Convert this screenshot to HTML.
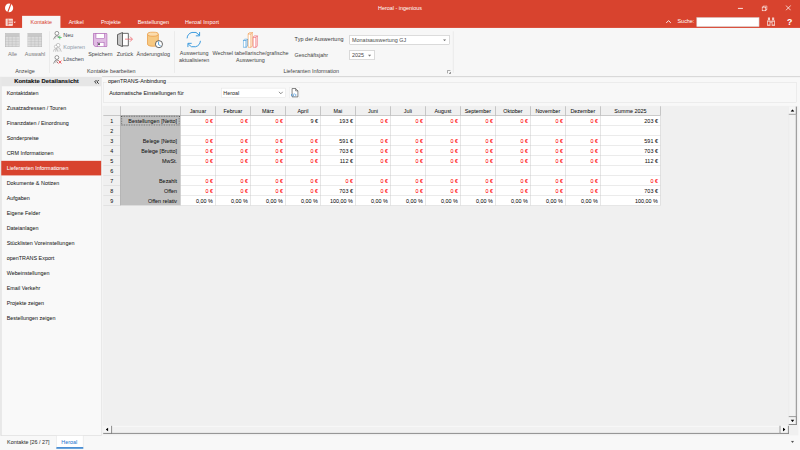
<!DOCTYPE html>
<html lang="de"><head><meta charset="utf-8"><title>Heroal - ingenious</title>
<style>
html,body{margin:0;padding:0;width:800px;height:450px;overflow:hidden;background:#f0f0f0}
#app{position:absolute;left:0;top:0;width:1920px;height:1080px;transform:scale(0.4166667);transform-origin:0 0;font-family:"Liberation Sans","DejaVu Sans",sans-serif;font-size:13px;letter-spacing:0;color:#222;background:#f0f0f0;overflow:hidden}
#app *{box-sizing:border-box}
#app{-webkit-text-stroke:0.08px currentColor}
#ribbon,#title{-webkit-text-stroke:0}
.abs{position:absolute}
.t{position:absolute;white-space:nowrap;line-height:14px}
.c{text-align:center;transform:translateX(-50%)}
/* title */
#title{left:0;top:0;width:1920px;height:68px;background:#d8432e}
#title .t{color:#fff}
.tab{position:absolute;top:38px;height:30px;color:#fff;line-height:32px;text-align:center;white-space:nowrap}
.tab.act{background:#f7f7f7;color:#d8432e}
#ribbon{z-index:2;left:0;top:67px;width:1920px;height:117px;background:#f7f7f7}
.sep{position:absolute;top:8px;width:1px;height:100px;background:#dadada}
.gl{position:absolute;top:98px;color:#444;white-space:nowrap;transform:translateX(-50%);line-height:14px}
.bl{position:absolute;color:#444;white-space:nowrap;transform:translateX(-50%);text-align:center;line-height:15px}
.combo{position:absolute;background:#fff;border:1px solid #ababab;height:22px;line-height:20px;padding-left:4px;color:#333}
/* sidebar */
#side{left:2px;top:184px;width:242px;height:862px;background:#f9f9f9;border-right:1px solid #c2c2c2;border-left:1px solid #bdbdbd;border-bottom:1px solid #c4c4c4;box-shadow:-2px 0 0 #f0f0f0}
#sidehead{left:0;top:0;width:240px;height:23px;-webkit-text-stroke:0.35px #111;background:#e6e6e6;font-weight:bold;color:#111;line-height:22px;font-size:14px;letter-spacing:0.2px}
.si{position:absolute;left:0;width:240px;height:36px;line-height:38px;padding-left:13px;color:#222;white-space:nowrap}
.si.sel{background:#d8432e;color:#fff;height:35px;margin-top:0;line-height:37px}
/* grid */
#grid .hl{height:1px;background:#d0d0d0}
#grid .hl2{height:1px;background:#cfcfcf}
#grid .vl{width:1px;background:#c4c4c4}
#grid .hd{background:#8c8c8c}
#grid .gt{color:#111}
#grid .gt.r{color:#f00}
</style></head><body>
<div id="app">

<!-- TITLE BAR -->
<div id="title" class="abs">
  <svg class="abs" style="left:10px;top:6px" width="26" height="28" viewBox="0 0 26 28"><ellipse cx="11.8" cy="13" rx="9.8" ry="10.6" fill="#fff"/><path d="M15.2 1.5L17.8 2.2L9.6 24.5L7 23.8Z" fill="#d8432e"/></svg>
  <div class="t c" style="left:960px;top:12px">Heroal - ingenious</div>
  <div class="abs" style="left:1771px;top:19px;width:12px;height:2px;background:#fff"></div>
  <svg class="abs" style="left:1828px;top:13px" width="14" height="14" viewBox="0 0 14 14"><path d="M4 3.5V1h9v9h-2.5" fill="none" stroke="#fff" stroke-width="1.5"/><rect x="1" y="4" width="9" height="9" fill="none" stroke="#fff" stroke-width="1.8"/></svg>
  <svg class="abs" style="left:1885px;top:12px" width="14" height="14" viewBox="0 0 14 14"><path d="M1 1L13 13M13 1L1 13" stroke="#fff" stroke-width="1.8"/></svg>
  <!-- second row right -->
  <svg class="abs" style="left:1598px;top:47px" width="13" height="10" viewBox="0 0 13 10"><path d="M1 8L6.5 2.5L12 8" stroke="#fff" stroke-width="2.2" fill="none"/></svg>
  <div class="t" style="left:1626px;top:45px">Suche:</div>
  <div class="abs" style="left:1672px;top:42px;width:150px;height:22px;background:#fff;border:1px solid #c9c9c9"></div>
  <svg class="abs" style="left:1840px;top:41px" width="22" height="22" viewBox="0 0 22 22"><g fill="#f5cfc9"><rect x="3" y="1" width="5" height="6"/><rect x="13" y="1" width="5" height="6"/><rect x="1" y="8" width="8" height="13"/><rect x="12" y="8" width="8" height="13"/><rect x="9" y="9" width="3" height="5"/></g><g fill="#d8432e"><rect x="3" y="11" width="4" height="7"/><rect x="14" y="11" width="4" height="7"/></g></svg>
  <div class="t" style="left:1889px;top:42px;font-size:21px;line-height:20px;font-weight:bold;letter-spacing:0">?</div>
  <!-- app menu icon -->
  <svg class="abs" style="left:13px;top:44px" width="26" height="19" viewBox="0 0 26 19"><rect x="1" y="1.5" width="16" height="16" fill="#f6d6d0" stroke="#fbeae7" stroke-width="1.6"/><path d="M6.5 2V17M6.5 6.8H17M6.5 12H17" stroke="#d8432e" stroke-width="1.5"/><path d="M19.5 8h5.5l-2.75 3z" fill="#fff"/></svg>
  <div class="tab act" style="left:53px;width:92px">Kontakte</div>
  <div class="tab" style="left:144px;width:78px">Artikel</div>
  <div class="tab" style="left:222px;width:88px">Projekte</div>
  <div class="tab" style="left:313px;width:110px">Bestellungen</div>
  <div class="tab" style="left:424px;width:122px;letter-spacing:0.25px">Heroal Import</div>
</div>

<!-- RIBBON -->
<div id="ribbon" class="abs">
  <!-- Anzeige -->
  <svg class="abs" style="left:12px;top:12px" width="35" height="34" viewBox="0 0 36 36" preserveAspectRatio="none"><rect x="0.500" y="0.500" width="35" height="35" fill="#dcdcdc" stroke="#adadad" stroke-width="1.400"/><rect x="1" y="1" width="34" height="8" fill="#c9c9c9"/><path d="M0 9H36M0 15.500H36M0 22H36M0 28.500H36M9 9V36M18 9V36M27 9V36" stroke="#b9b9b9"/></svg>
  <svg class="abs" style="left:66px;top:12px" width="35" height="34" viewBox="0 0 36 36" preserveAspectRatio="none"><rect x="0.500" y="0.500" width="35" height="35" fill="#dcdcdc" stroke="#adadad" stroke-width="1.400"/><rect x="1" y="1" width="34" height="8" fill="#c9c9c9"/><path d="M0 9H36M0 15.500H36M0 22H36M0 28.500H36M9 9V36M18 9V36M27 9V36" stroke="#b9b9b9"/></svg>
  <div class="bl" style="left:30px;top:56px;color:#7a7a7a">Alle</div>
  <div class="bl" style="left:84px;top:56px;color:#7a7a7a">Auswahl</div>
  <div class="gl" style="left:60px">Anzeige</div>
  <div class="sep" style="left:119px"></div>
  <!-- small buttons -->
  <svg class="abs" style="left:127px;top:7px" width="23" height="22" viewBox="0 0 23 22"><circle cx="9.5" cy="6" r="4.6" fill="#fff" stroke="#555" stroke-width="1.4"/><path d="M1.5 20.5L5 13.5Q9.500 10.5 14 13.500L15 15.500" fill="none" stroke="#555" stroke-width="1.4"/><path d="M6.500 14v5M12 14v3" stroke="#888" stroke-width="1"/><path d="M16.500 11.500v9M12 16h9" stroke="#56c26b" stroke-width="2"/></svg>
  <svg class="abs" style="left:127px;top:36px" width="23" height="22" viewBox="0 0 23 22"><circle cx="12.500" cy="5.500" r="4.300" fill="#fff" stroke="#9a9a9a" stroke-width="1.3"/><path d="M6 21L8.500 13Q12.500 10 17 13L20 21" fill="none" stroke="#9a9a9a" stroke-width="1.3"/><circle cx="7" cy="9" r="3.600" fill="#fff" stroke="#9a9a9a" stroke-width="1.2"/><path d="M1 21L3 15.500Q7 13 10.500 15.500L12 21" fill="none" stroke="#9a9a9a" stroke-width="1.2"/><path d="M10 17v4M15 15v6" stroke="#b5b5b5" stroke-width="1"/></svg>
  <svg class="abs" style="left:127px;top:65px" width="23" height="22" viewBox="0 0 23 22"><circle cx="9.500" cy="6" r="4.600" fill="#fff" stroke="#555" stroke-width="1.4"/><path d="M1.500 20.500L5 13.500Q9.500 10.500 14 13.500" fill="none" stroke="#555" stroke-width="1.400"/><path d="M6.500 14v5" stroke="#888" stroke-width="1"/><path d="M9 15.500l3 4" stroke="#7a2020" stroke-width="1.600"/><path d="M13.500 13.500l7 7M20.500 13.500l-7 7" stroke="#ee3a43" stroke-width="2"/></svg>
  <div class="t" style="left:152px;top:11px;color:#3c4450">Neu</div>
  <div class="t" style="left:152px;top:40px;color:#8b97a8">Kopieren</div>
  <div class="t" style="left:152px;top:69px;color:#3c4450">Löschen</div>
  <!-- Speichern -->
  <svg class="abs" style="left:223px;top:12px" width="35" height="34" viewBox="0 0 36 36" preserveAspectRatio="none"><path d="M3 1h30a2 2 0 0 1 2 2v30a2 2 0 0 1-2 2H6L1 30V3a2 2 0 0 1 2-2z" fill="#e0bce3" stroke="#a85cb0" stroke-width="1.800"/><rect x="7.500" y="1.500" width="21" height="13" fill="#fff" stroke="#a85cb0" stroke-width="1.400"/><rect x="11.500" y="24" width="16" height="11" fill="#fff" stroke="#a85cb0" stroke-width="1.400"/><rect x="13" y="26" width="4" height="5" fill="#444"/></svg>
  <div class="bl" style="left:241px;top:56px">Speichern</div>
  <!-- Zurück -->
  <svg class="abs" style="left:280px;top:10px" width="40" height="36" viewBox="0 0 40 36"><path d="M14 3h14v30H14" fill="#fff" stroke="#444" stroke-width="1.900"/><path d="M14 1L2 6v24l12 5z" fill="#c6c6c6" stroke="#444" stroke-width="1.900"/><path d="M20 17h17M32 11l6 6-6 6" fill="none" stroke="#f0646c" stroke-width="1.900"/></svg>
  <div class="bl" style="left:300px;top:56px">Zurück</div>
  <!-- Änderungslog -->
  <svg class="abs" style="left:352px;top:8px" width="44" height="42" viewBox="0 0 44 42"><path d="M2 7v24c0 3 5.500 5 13 5s13-2 13-5V7" fill="#f6c983" stroke="#e8983f" stroke-width="1.700"/><ellipse cx="15" cy="7" rx="13" ry="5" fill="#fbdcae" stroke="#e8983f" stroke-width="1.700"/><circle cx="29.500" cy="31" r="8.500" fill="#fff" stroke="#484848" stroke-width="2"/><path d="M28.500 25v7l5 3" fill="none" stroke="#2f8fd6" stroke-width="1.900"/></svg>
  <div class="bl" style="left:368px;top:56px">Änderungslog</div>
  <div class="gl" style="left:267px">Kontakte bearbeiten</div>
  <div class="sep" style="left:419px"></div>
  <!-- Auswertung aktualisieren -->
  <svg class="abs" style="left:445px;top:8px" width="40" height="40" viewBox="0 0 40 40"><path d="M4 17A16 16 0 0 1 33 9" fill="none" stroke="#3396dc" stroke-width="2.300"/><path d="M34 2v9h-9" fill="none" stroke="#3396dc" stroke-width="2.300"/><path d="M36 23A16 16 0 0 1 7 31" fill="none" stroke="#3396dc" stroke-width="2.300"/><path d="M6 38v-9h9" fill="none" stroke="#3396dc" stroke-width="2.300"/></svg>
  <div class="bl" style="left:466px;top:55px;line-height:14.500px">Auswertung<br>aktualisieren</div>
  <!-- Wechsel -->
  <svg class="abs" style="left:583px;top:10px" width="38" height="38" viewBox="0 0 38 38"><path d="M0.8 20.2H7.8V36.5H0.8Z" fill="#fff" stroke="#2f8fd6" stroke-width="1.3"/><path d="M7.8 20.2L11.0 17V33.3L7.8 36.5Z" fill="#fff" stroke="#2f8fd6" stroke-width="1.2"/><path d="M0.8 20.2L4.0 17H11.0L7.8 20.2Z" fill="#fff" stroke="#2f8fd6" stroke-width="1.2"/><path d="M12.6 4.2H19.6V36.5H12.6Z" fill="#fff" stroke="#f0913a" stroke-width="1.3"/><path d="M19.6 4.2L22.8 1V33.3L19.6 36.5Z" fill="#fff" stroke="#f0913a" stroke-width="1.2"/><path d="M12.6 4.2L15.8 1H22.8L19.6 4.2Z" fill="#fff" stroke="#f0913a" stroke-width="1.2"/><path d="M24.6 12.2H31.6V36.5H24.6Z" fill="#fff" stroke="#ea4e58" stroke-width="1.3"/><path d="M31.6 12.2L34.800000000000004 9V33.3L31.6 36.5Z" fill="#fff" stroke="#ea4e58" stroke-width="1.2"/><path d="M24.6 12.2L27.8 9H34.800000000000004L31.6 12.2Z" fill="#fff" stroke="#ea4e58" stroke-width="1.2"/></svg>
  <div class="bl" style="left:601px;top:55px;line-height:14.500px">Wechsel tabellarische/grafische<br>Auswertung</div>
  <!-- combos -->
  <div class="t" style="left:707px;top:20px;color:#333;letter-spacing:0.15px">Typ der Auswertung</div>
  <div class="combo" style="left:839px;top:17px;width:240px;height:23px;line-height:23px;color:#4a4a4a;padding-left:5px">Monatsauswertung GJ<svg class="abs" style="right:7px;top:9px" width="8" height="5" viewBox="0 0 8 5"><path d="M0 0h8L4 5z" fill="#777"/></svg></div>
  <div class="t" style="left:707px;top:58px;color:#444">Geschäftsjahr</div>
  <div class="combo" style="left:839px;top:54px;width:60px;height:23px;line-height:22px;color:#4a4a4a;padding-left:5px">2025<svg class="abs" style="right:7px;top:9px" width="8" height="5" viewBox="0 0 8 5"><path d="M0 0h8L4 5z" fill="#777"/></svg></div>
  <div class="gl" style="left:747px">Lieferanten Information</div>
  <svg class="abs" style="left:1073px;top:101px" width="10" height="10" viewBox="0 0 10 10"><path d="M1 8V1h7" fill="none" stroke="#666" stroke-width="1.4"/><path d="M9 4v5H4z" fill="#666"/></svg>
  <div class="sep" style="left:1087px"></div>
</div>

<!-- SIDEBAR -->
<div class="abs" style="left:245px;top:182.600px;width:1675px;height:2px;background:#cfcfcf;z-index:3"></div>
<div id="side" class="abs">
  <div id="sidehead" class="abs"><span class="abs" style="left:31px;white-space:nowrap">Kontakte Detailansicht</span>
    <svg class="abs" style="left:223px;top:7px" width="12" height="11" viewBox="0 0 11 10"><path d="M5 1L1 5l4 4M10 1L6 5l4 4" fill="none" stroke="#111" stroke-width="1.9"/></svg></div>
  <div class="si" style="top:22px">Kontaktdaten</div>
  <div class="si" style="top:58px">Zusatzadressen / Touren</div>
  <div class="si" style="top:94px">Finanzdaten / Einordnung</div>
  <div class="si" style="top:130px">Sonderpreise</div>
  <div class="si" style="top:166px">CRM Informationen</div>
  <div class="si sel" style="top:202px">Lieferanten Informationen</div>
  <div class="si" style="top:238px">Dokumente &amp; Notizen</div>
  <div class="si" style="top:274px">Aufgaben</div>
  <div class="si" style="top:310px">Eigene Felder</div>
  <div class="si" style="top:346px">Dateianlagen</div>
  <div class="si" style="top:382px">Stücklisten Voreinstellungen</div>
  <div class="si" style="top:418px">openTRANS Export</div>
  <div class="si" style="top:454px">Webeinstellungen</div>
  <div class="si" style="top:490px">Email Verkehr</div>
  <div class="si" style="top:526px">Projekte zeigen</div>
  <div class="si" style="top:562px">Bestellungen zeigen</div>
</div>

<!-- MAIN -->
<div class="abs" style="left:244px;top:185px;width:1676px;height:862px;background:#f8f8f8"></div>
<div class="abs" style="left:246px;top:254px;width:1670px;height:791px;background:#f0f0f0"></div>
<div class="abs" style="left:248px;top:197px;width:1664px;height:49px;border:1px solid #dcdcdc"></div>
<div class="t" style="left:256px;top:189px;background:#f8f8f8;padding:0 3px;color:#222">openTRANS-Anbindung</div>
<div class="t" style="left:262px;top:217px;color:#222">Automatische Einstellungen für</div>
<div class="combo" style="left:531px;top:211px;width:155px;height:23px;line-height:22px;border-color:#dcdcdc;padding-left:4px">Heroal<svg class="abs" style="right:5px;top:7px" width="12" height="8" viewBox="0 0 12 8"><path d="M1 1L6 6L11 1" fill="none" stroke="#444" stroke-width="1.5"/></svg></div>
<svg class="abs" style="left:694px;top:209px" width="26" height="27" viewBox="0 0 26 27"><rect x="0.5" y="0.5" width="25" height="26" rx="1" fill="#fdfdfd" stroke="#dedede"/><path d="M7 3.500h8.500l5.500 5.500v14.500H7z" fill="#fff" stroke="#3c3c3c" stroke-width="1.5"/><path d="M15.500 3.500v5.500h5.500" fill="none" stroke="#3c3c3c" stroke-width="1.400"/><path d="M7.500 16l-3 3 3 3M14 16l3 3-3 3M12 15.500l-2.500 7" fill="none" stroke="#2a86d8" stroke-width="1.600"/></svg>

<div id="grid" class="abs" style="left:248px;top:255px;width:1337px;height:238px">
<div class="abs" style="left:0;top:0;width:1337px;height:22px;background:#f0f0f0"></div>
<div class="abs" style="left:0;top:22px;width:41px;height:216px;background:#f0f0f0"></div>
<div class="abs" style="left:41px;top:22px;width:144px;height:216px;background:#c0c0c0"></div>
<div class="abs" style="left:185px;top:22px;width:1152px;height:216px;background:#fff"></div>
<div class="abs hl" style="left:185px;top:45px;width:1152px"></div>
<div class="abs hl2" style="left:0;top:45px;width:41px"></div>
<div class="abs hl" style="left:185px;top:69px;width:1152px"></div>
<div class="abs hl2" style="left:0;top:69px;width:41px"></div>
<div class="abs hl" style="left:185px;top:93px;width:1152px"></div>
<div class="abs hl2" style="left:0;top:93px;width:41px"></div>
<div class="abs hl" style="left:185px;top:117px;width:1152px"></div>
<div class="abs hl2" style="left:0;top:117px;width:41px"></div>
<div class="abs hl" style="left:185px;top:141px;width:1152px"></div>
<div class="abs hl2" style="left:0;top:141px;width:41px"></div>
<div class="abs hl" style="left:185px;top:165px;width:1152px"></div>
<div class="abs hl2" style="left:0;top:165px;width:41px"></div>
<div class="abs hl" style="left:185px;top:189px;width:1152px"></div>
<div class="abs hl2" style="left:0;top:189px;width:41px"></div>
<div class="abs hl" style="left:185px;top:213px;width:1152px"></div>
<div class="abs hl2" style="left:0;top:213px;width:41px"></div>
<div class="abs hl" style="left:185px;top:237px;width:1152px"></div>
<div class="abs hl2" style="left:0;top:237px;width:41px"></div>
<div class="abs hd" style="left:0;top:21px;width:1337px;height:1px"></div>
<div class="abs hd" style="left:40px;top:0;width:1px;height:22px"></div>
<div class="abs hd" style="left:40px;top:22px;width:1px;height:216px"></div>
<div class="abs hd" style="left:184px;top:0;width:1px;height:22px"></div>
<div class="abs" style="left:184px;top:22px;width:1px;height:216px;background:#a8a8a8"></div>
<div class="abs hd" style="left:268px;top:0;width:1px;height:22px"></div>
<div class="abs vl" style="left:268px;top:22px;height:216px"></div>
<div class="abs hd" style="left:352px;top:0;width:1px;height:22px"></div>
<div class="abs vl" style="left:352px;top:22px;height:216px"></div>
<div class="abs hd" style="left:436px;top:0;width:1px;height:22px"></div>
<div class="abs vl" style="left:436px;top:22px;height:216px"></div>
<div class="abs hd" style="left:520px;top:0;width:1px;height:22px"></div>
<div class="abs vl" style="left:520px;top:22px;height:216px"></div>
<div class="abs hd" style="left:604px;top:0;width:1px;height:22px"></div>
<div class="abs vl" style="left:604px;top:22px;height:216px"></div>
<div class="abs hd" style="left:688px;top:0;width:1px;height:22px"></div>
<div class="abs vl" style="left:688px;top:22px;height:216px"></div>
<div class="abs hd" style="left:772px;top:0;width:1px;height:22px"></div>
<div class="abs vl" style="left:772px;top:22px;height:216px"></div>
<div class="abs hd" style="left:856px;top:0;width:1px;height:22px"></div>
<div class="abs vl" style="left:856px;top:22px;height:216px"></div>
<div class="abs hd" style="left:940px;top:0;width:1px;height:22px"></div>
<div class="abs vl" style="left:940px;top:22px;height:216px"></div>
<div class="abs hd" style="left:1024px;top:0;width:1px;height:22px"></div>
<div class="abs vl" style="left:1024px;top:22px;height:216px"></div>
<div class="abs hd" style="left:1108px;top:0;width:1px;height:22px"></div>
<div class="abs vl" style="left:1108px;top:22px;height:216px"></div>
<div class="abs hd" style="left:1192px;top:0;width:1px;height:22px"></div>
<div class="abs vl" style="left:1192px;top:22px;height:216px"></div>
<div class="abs hd" style="left:1336px;top:0;width:1px;height:22px"></div>
<div class="abs vl" style="left:1336px;top:22px;height:216px"></div>
<div class="t c gt" style="left:227.0px;top:4px">Januar</div>
<div class="t c gt" style="left:311.0px;top:4px">Februar</div>
<div class="t c gt" style="left:395.0px;top:4px">März</div>
<div class="t c gt" style="left:479.0px;top:4px">April</div>
<div class="t c gt" style="left:563.0px;top:4px">Mai</div>
<div class="t c gt" style="left:647.0px;top:4px">Juni</div>
<div class="t c gt" style="left:731.0px;top:4px">Juli</div>
<div class="t c gt" style="left:815.0px;top:4px">August</div>
<div class="t c gt" style="left:899.0px;top:4px">September</div>
<div class="t c gt" style="left:983.0px;top:4px">Oktober</div>
<div class="t c gt" style="left:1067.0px;top:4px">November</div>
<div class="t c gt" style="left:1151.0px;top:4px">Dezember</div>
<div class="t c gt" style="left:1265.0px;top:4px">Summe 2025</div>
<div class="t c gt" style="left:20.5px;top:29px">1</div>
<div class="t gt" style="right:1160px;top:29px">Bestellungen [Netto]</div>
<div class="t gt r" style="right:1074px;top:29px">0 €</div>
<div class="t gt r" style="right:990px;top:29px">0 €</div>
<div class="t gt r" style="right:906px;top:29px">0 €</div>
<div class="t gt" style="right:822px;top:29px">9 €</div>
<div class="t gt" style="right:738px;top:29px">193 €</div>
<div class="t gt r" style="right:654px;top:29px">0 €</div>
<div class="t gt r" style="right:570px;top:29px">0 €</div>
<div class="t gt r" style="right:486px;top:29px">0 €</div>
<div class="t gt r" style="right:402px;top:29px">0 €</div>
<div class="t gt r" style="right:318px;top:29px">0 €</div>
<div class="t gt r" style="right:234px;top:29px">0 €</div>
<div class="t gt r" style="right:150px;top:29px">0 €</div>
<div class="t gt" style="right:6px;top:29px">203 €</div>
<div class="t c gt" style="left:20.5px;top:53px">2</div>
<div class="t c gt" style="left:20.5px;top:77px">3</div>
<div class="t gt" style="right:1160px;top:77px">Belege [Netto]</div>
<div class="t gt r" style="right:1074px;top:77px">0 €</div>
<div class="t gt r" style="right:990px;top:77px">0 €</div>
<div class="t gt r" style="right:906px;top:77px">0 €</div>
<div class="t gt r" style="right:822px;top:77px">0 €</div>
<div class="t gt" style="right:738px;top:77px">591 €</div>
<div class="t gt r" style="right:654px;top:77px">0 €</div>
<div class="t gt r" style="right:570px;top:77px">0 €</div>
<div class="t gt r" style="right:486px;top:77px">0 €</div>
<div class="t gt r" style="right:402px;top:77px">0 €</div>
<div class="t gt r" style="right:318px;top:77px">0 €</div>
<div class="t gt r" style="right:234px;top:77px">0 €</div>
<div class="t gt r" style="right:150px;top:77px">0 €</div>
<div class="t gt" style="right:6px;top:77px">591 €</div>
<div class="t c gt" style="left:20.5px;top:101px">4</div>
<div class="t gt" style="right:1160px;top:101px">Belege [Brutto]</div>
<div class="t gt r" style="right:1074px;top:101px">0 €</div>
<div class="t gt r" style="right:990px;top:101px">0 €</div>
<div class="t gt r" style="right:906px;top:101px">0 €</div>
<div class="t gt r" style="right:822px;top:101px">0 €</div>
<div class="t gt" style="right:738px;top:101px">703 €</div>
<div class="t gt r" style="right:654px;top:101px">0 €</div>
<div class="t gt r" style="right:570px;top:101px">0 €</div>
<div class="t gt r" style="right:486px;top:101px">0 €</div>
<div class="t gt r" style="right:402px;top:101px">0 €</div>
<div class="t gt r" style="right:318px;top:101px">0 €</div>
<div class="t gt r" style="right:234px;top:101px">0 €</div>
<div class="t gt r" style="right:150px;top:101px">0 €</div>
<div class="t gt" style="right:6px;top:101px">703 €</div>
<div class="t c gt" style="left:20.5px;top:125px">5</div>
<div class="t gt" style="right:1160px;top:125px">MwSt.</div>
<div class="t gt r" style="right:1074px;top:125px">0 €</div>
<div class="t gt r" style="right:990px;top:125px">0 €</div>
<div class="t gt r" style="right:906px;top:125px">0 €</div>
<div class="t gt r" style="right:822px;top:125px">0 €</div>
<div class="t gt" style="right:738px;top:125px">112 €</div>
<div class="t gt r" style="right:654px;top:125px">0 €</div>
<div class="t gt r" style="right:570px;top:125px">0 €</div>
<div class="t gt r" style="right:486px;top:125px">0 €</div>
<div class="t gt r" style="right:402px;top:125px">0 €</div>
<div class="t gt r" style="right:318px;top:125px">0 €</div>
<div class="t gt r" style="right:234px;top:125px">0 €</div>
<div class="t gt r" style="right:150px;top:125px">0 €</div>
<div class="t gt" style="right:6px;top:125px">112 €</div>
<div class="t c gt" style="left:20.5px;top:149px">6</div>
<div class="t c gt" style="left:20.5px;top:173px">7</div>
<div class="t gt" style="right:1160px;top:173px">Bezahlt</div>
<div class="t gt r" style="right:1074px;top:173px">0 €</div>
<div class="t gt r" style="right:990px;top:173px">0 €</div>
<div class="t gt r" style="right:906px;top:173px">0 €</div>
<div class="t gt r" style="right:822px;top:173px">0 €</div>
<div class="t gt r" style="right:738px;top:173px">0 €</div>
<div class="t gt r" style="right:654px;top:173px">0 €</div>
<div class="t gt r" style="right:570px;top:173px">0 €</div>
<div class="t gt r" style="right:486px;top:173px">0 €</div>
<div class="t gt r" style="right:402px;top:173px">0 €</div>
<div class="t gt r" style="right:318px;top:173px">0 €</div>
<div class="t gt r" style="right:234px;top:173px">0 €</div>
<div class="t gt r" style="right:150px;top:173px">0 €</div>
<div class="t gt r" style="right:6px;top:173px">0 €</div>
<div class="t c gt" style="left:20.5px;top:197px">8</div>
<div class="t gt" style="right:1160px;top:197px">Offen</div>
<div class="t gt r" style="right:1074px;top:197px">0 €</div>
<div class="t gt r" style="right:990px;top:197px">0 €</div>
<div class="t gt r" style="right:906px;top:197px">0 €</div>
<div class="t gt r" style="right:822px;top:197px">0 €</div>
<div class="t gt" style="right:738px;top:197px">703 €</div>
<div class="t gt r" style="right:654px;top:197px">0 €</div>
<div class="t gt r" style="right:570px;top:197px">0 €</div>
<div class="t gt r" style="right:486px;top:197px">0 €</div>
<div class="t gt r" style="right:402px;top:197px">0 €</div>
<div class="t gt r" style="right:318px;top:197px">0 €</div>
<div class="t gt r" style="right:234px;top:197px">0 €</div>
<div class="t gt r" style="right:150px;top:197px">0 €</div>
<div class="t gt" style="right:6px;top:197px">703 €</div>
<div class="t c gt" style="left:20.5px;top:221px">9</div>
<div class="t gt" style="right:1160px;top:221px">Offen relativ</div>
<div class="t gt" style="right:1074px;top:221px">0,00 %</div>
<div class="t gt" style="right:990px;top:221px">0,00 %</div>
<div class="t gt" style="right:906px;top:221px">0,00 %</div>
<div class="t gt" style="right:822px;top:221px">0,00 %</div>
<div class="t gt" style="right:738px;top:221px">100,00 %</div>
<div class="t gt" style="right:654px;top:221px">0,00 %</div>
<div class="t gt" style="right:570px;top:221px">0,00 %</div>
<div class="t gt" style="right:486px;top:221px">0,00 %</div>
<div class="t gt" style="right:402px;top:221px">0,00 %</div>
<div class="t gt" style="right:318px;top:221px">0,00 %</div>
<div class="t gt" style="right:234px;top:221px">0,00 %</div>
<div class="t gt" style="right:150px;top:221px">0,00 %</div>
<div class="t gt" style="right:6px;top:221px">100,00 %</div>
<div class="abs" style="left:43px;top:23px;width:140px;height:23px;border:2px dotted #555"></div>
</div>

<!-- scrollbars -->
<div class="abs" style="left:1893px;top:256px;width:19px;height:764px;background:#f3f3f3;border-left:1px solid #e2e2e2;border-right:2px solid #7a7a7a"></div>
<div class="abs" style="left:1893px;top:256px;width:19px;height:20px;background:#f6f6f6;border-bottom:3px solid #b4b4b4;border-right:2px solid #707070"><svg class="abs" style="left:4px;top:6px" width="10" height="6" viewBox="0 0 11 7"><path d="M5.500 0L11 7H0z" fill="#000"/></svg></div>
<div class="abs" style="left:1893px;top:999px;width:19px;height:21px;background:#f4f4f4;border-top:2px solid #8a8a8a;border-bottom:2px solid #777;border-right:2px solid #707070"><svg class="abs" style="left:4px;top:6px" width="10" height="6" viewBox="0 0 11 7"><path d="M0 0H11L5.500 7z" fill="#000"/></svg></div>
<div class="abs" style="left:248px;top:1022px;width:1645px;height:19px;background:#f1f1f1;border-top:2px solid #f9f9f9;border-bottom:2px solid #7a7a7a"></div>
<div class="abs" style="left:248px;top:1022px;width:21px;height:19px;background:#f6f6f6;border-right:2px solid #777;border-bottom:2px solid #777"><svg class="abs" style="left:6px;top:4px" width="6" height="10" viewBox="0 0 7 11"><path d="M7 0V11L0 5.500z" fill="#000"/></svg></div>
<div class="abs" style="left:1871px;top:1022px;width:22px;height:19px;background:#f6f6f6;border-left:2px solid #8a8a8a;border-right:2px solid #777;border-bottom:2px solid #777"><svg class="abs" style="left:6px;top:4px" width="6" height="10" viewBox="0 0 7 11"><path d="M0 0V11L7 5.500z" fill="#000"/></svg></div>

<!-- bottom tab strip -->
<div class="abs" style="left:0;top:1046px;width:1920px;height:34px;background:#f8f8f8"></div>
<div class="t" style="left:17px;top:1055px;color:#333">Kontakte [26 / 27]</div>
<div class="abs" style="left:135px;top:1046px;width:65px;height:31px;background:#fff;border-left:1px solid #dadada;border-right:1px solid #dadada;border-bottom:4.500px solid #3c86d0"></div>
<div class="t" style="left:147px;top:1055px;color:#2b7ad0">Heroal</div>
<svg class="abs" style="left:1898px;top:1058px" width="8" height="5" viewBox="0 0 8 5"><path d="M0 0h8L4 5z" fill="#555"/></svg>

</div>
</body></html>
